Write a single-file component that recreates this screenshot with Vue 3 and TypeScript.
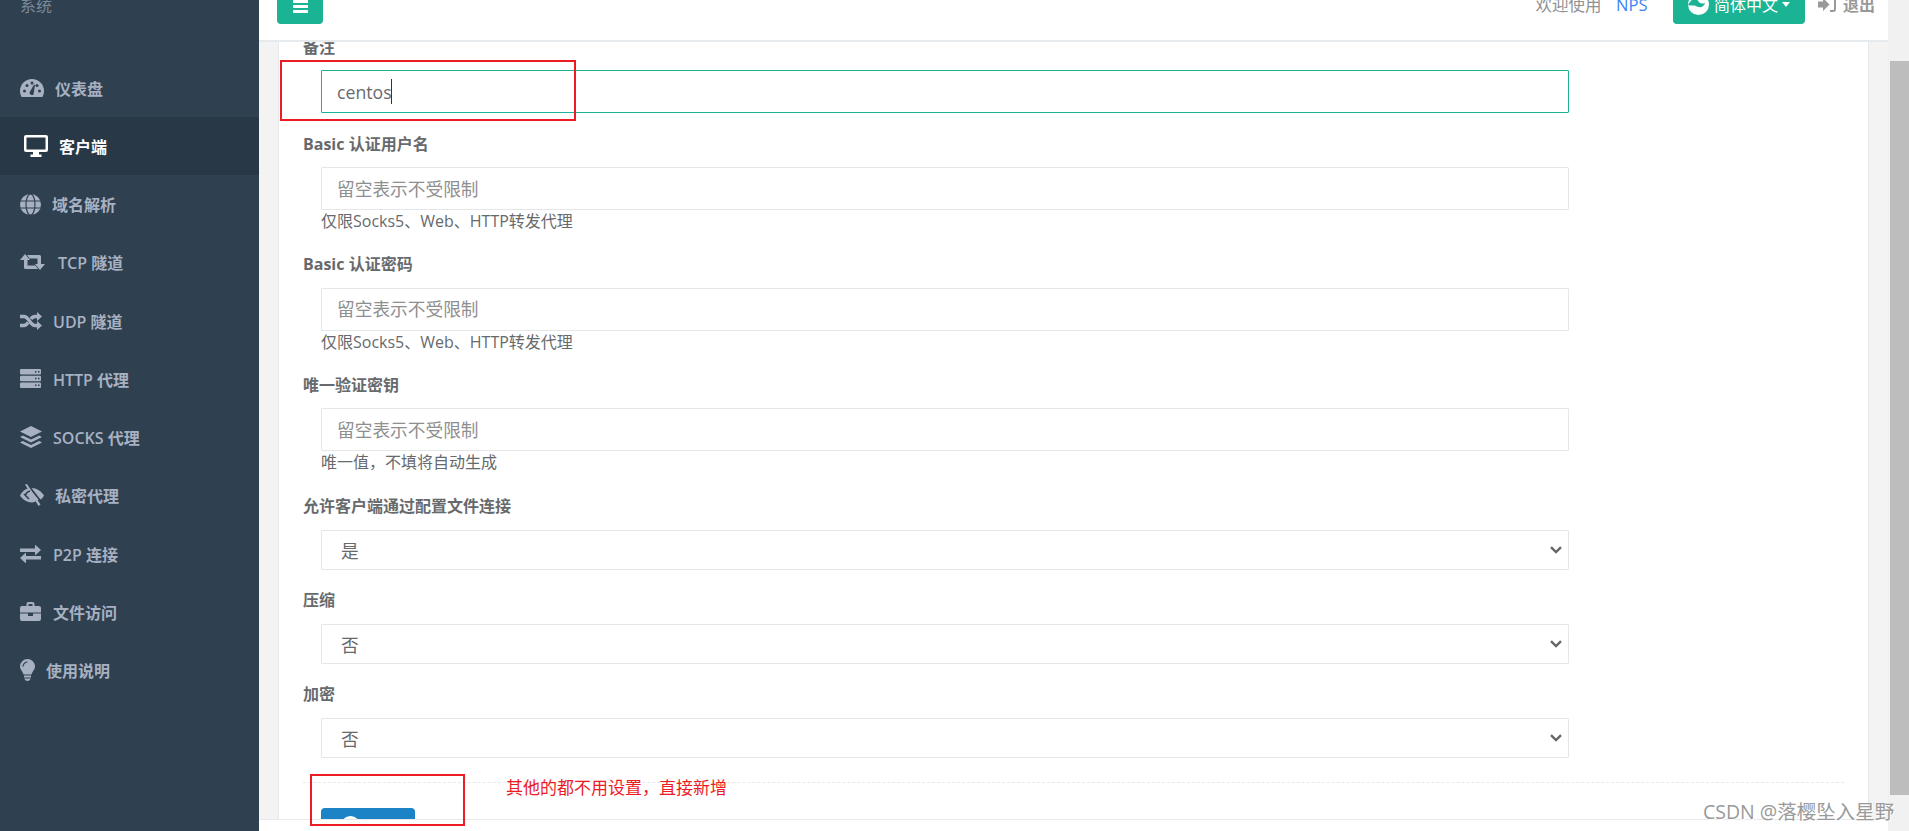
<script setup lang="ts">
interface NavItem {
  id: string
  label: string
  w: number
  h: number
  gap: number
  active?: boolean
}

const navItems: NavItem[] = [
  { id: 'dash', label: '仪表盘', w: 24, h: 18, gap: 11 },
  { id: 'desktop', label: '客户端', w: 24, h: 22, gap: 11, active: true },
  { id: 'globe', label: '域名解析', w: 21, h: 21, gap: 11 },
  { id: 'retweet', label: 'TCP 隧道', w: 25, h: 16, gap: 13 },
  { id: 'random', label: 'UDP 隧道', w: 22, h: 18, gap: 11 },
  { id: 'server', label: 'HTTP 代理', w: 21, h: 19, gap: 12 },
  { id: 'layers', label: 'SOCKS 代理', w: 22, h: 22, gap: 11 },
  { id: 'eye', label: '私密代理', w: 24, h: 22, gap: 11 },
  { id: 'exchange', label: 'P2P 连接', w: 21, h: 18, gap: 12 },
  { id: 'case', label: '文件访问', w: 21, h: 19, gap: 12 },
  { id: 'bulb', label: '使用说明', w: 15, h: 22, gap: 11 },
]

const tip = '留空表示不受限制'
const proxyHelp = '仅限Socks5、Web、HTTP转发代理'
</script>

<template>
  <div class="page">
    <aside class="sidebar">
      <div class="sys">系统</div>
      <ul class="nav">
        <li v-for="item in navItems" :key="item.id" :class="['nav-item', { active: item.active }]">
          <svg
            class="nav-icon"
            :width="item.w"
            :height="item.h"
            :viewBox="`0 0 ${item.w} ${item.h}`"
            :style="{ marginRight: item.gap + 'px' }"
          >
            <template v-if="item.id === 'dash'">
              <path d="M1.6 18C.6 16.2 0 14.200 0 12A12 12 0 0 1 24 12C24 14.200 23.400 16.200 22.400 18Z" />
              <g fill="#2f4050">
                <circle cx="4.500" cy="12" r="1.500" />
                <circle cx="7" cy="6.500" r="1.500" />
                <circle cx="12" cy="4" r="1.500" />
                <circle cx="19.500" cy="12" r="1.500" />
                <circle cx="17" cy="6.500" r="1.500" />
                <path d="M9.500 13.500L14 5.500L15 6L13.500 15.500A2.500 2.500 0 0 1 9.500 13.500Z" />
              </g>
            </template>
            <template v-else-if="item.id === 'desktop'">
              <path fill-rule="evenodd" d="M2 0H22A2 2 0 0 1 24 2V15A2 2 0 0 1 22 17H15V19.500H17.500V22H6.500V19.500H9V17H2A2 2 0 0 1 0 15V2A2 2 0 0 1 2 0ZM2.500 2.500V14.500H21.500V2.500Z" />
            </template>
            <template v-else-if="item.id === 'globe'">
              <circle cx="10.500" cy="10.500" r="10.500" />
              <g fill="none" stroke="#2f4050" stroke-width="1.200">
                <ellipse cx="10.500" cy="10.500" rx="4.500" ry="10.500" />
                <path d="M.5 7H20.500M.5 14H20.500" />
              </g>
            </template>
            <template v-else-if="item.id === 'retweet'">
              <path d="M0 6L5 0L10 6H7.500V11.500H15.500L18 15H5.500A1.500 1.500 0 0 1 4 13.500V6Z" />
              <path d="M25 10L20 16L15 10H17.500V4.500H9.500L7 1H19.500A1.500 1.500 0 0 1 21 2.500V10Z" />
            </template>
            <template v-else-if="item.id === 'random'">
              <g fill="none" stroke="#a7b1c2" stroke-width="3.400">
                <path d="M0 4.500H4C9 4.500 10 13.500 15 13.500H18" />
                <path d="M0 13.500H4C6 13.500 7 12 8 10.500" />
                <path d="M11 7C12 5.500 13 4.500 15 4.500H18" />
              </g>
              <path d="M17 0L22 4.500L17 9ZM17 9L22 13.500L17 18Z" />
            </template>
            <template v-else-if="item.id === 'server'">
              <rect x="0" y="0" width="21" height="5.500" rx="1" />
              <rect x="0" y="6.750" width="21" height="5.500" rx="1" />
              <rect x="0" y="13.500" width="21" height="5.500" rx="1" />
              <g fill="#2f4050">
                <rect x="15" y="2" width="1.500" height="1.500" />
                <rect x="18" y="2" width="1.500" height="1.500" />
                <rect x="15" y="8.750" width="1.500" height="1.500" />
                <rect x="18" y="8.750" width="1.500" height="1.500" />
                <rect x="15" y="15.500" width="1.500" height="1.500" />
                <rect x="18" y="15.500" width="1.500" height="1.500" />
              </g>
            </template>
            <template v-else-if="item.id === 'layers'">
              <path d="M11 0L22 5.500L11 11L0 5.500Z" />
              <path d="M2.800 9.500L11 13.500L19.200 9.500L22 11L11 16.500L0 11Z" />
              <path d="M2.800 15L11 19L19.200 15L22 16.500L11 22L0 16.500Z" />
            </template>
            <template v-else-if="item.id === 'eye'">
              <path d="M0 11.500C2 7.500 5.500 5 9 4.300L18.500 15.500C16 17.500 13.500 18.500 12 18.500C7 18.500 2.500 15.500 0 11.500Z" />
              <path d="M11.500 4C16.500 4 21.500 7.500 24 11.500C23 13.500 22 14.500 20.500 15.500Z" />
              <path d="M5 0.500L7 0L20.500 20.500L18.500 22Z" />
              <path fill="none" stroke="#2f4050" stroke-width="1.600" d="M5.500 11.500C6 9 8 7.500 10 7M9 15L4 10" />
            </template>
            <template v-else-if="item.id === 'exchange'">
              <path d="M0 4H15V0L21 5.500L15 11V7.500H0Z" transform="translate(0 -0.500)" />
              <path d="M21 14H6V18L0 12.500L6 7V10.500H21Z" transform="translate(0 0.500)" />
            </template>
            <template v-else-if="item.id === 'case'">
              <path fill-rule="evenodd" d="M6.500 4V2A2 2 0 0 1 8.500 0H12.500A2 2 0 0 1 14.500 2V4H19A2 2 0 0 1 21 6V10.500H0V6A2 2 0 0 1 2 4ZM8.500 2V4H12.500V2Z" />
              <path d="M0 11.500H8V14H13V11.500H21V17A2 2 0 0 1 19 19H2A2 2 0 0 1 0 17Z" />
            </template>
            <template v-else>
              <path d="M7.500 0A7.500 7.500 0 0 1 15 7.500C15 10.500 12.500 12 11.500 15.500H3.500C2.500 12 0 10.500 0 7.500A7.500 7.500 0 0 1 7.500 0Z" />
              <path d="M4 16.500H11V18.500H4ZM4.500 19.500H10.500C10.500 21 9 22 7.500 22C6 22 4.500 21 4.500 19.500Z" />
              <path fill="none" stroke="#2f4050" stroke-width="1.200" d="M3 7.500A4.500 4.500 0 0 1 7.500 3" />
            </template>
          </svg>
          <span>{{ item.label }}</span>
        </li>
      </ul>
    </aside>

    <main class="main">
      <header class="topbar">
        <div class="topbar-row">
          <button class="green-btn menu-btn" type="button">
            <svg width="15" height="14" viewBox="0 0 15 14" fill="#fff">
              <rect y="0" width="15" height="3" rx=".5" />
              <rect y="5" width="15" height="3" rx=".5" />
              <rect y="10" width="15" height="3" rx=".5" />
            </svg>
          </button>
          <div class="spacer"></div>
          <span class="welcome">欢迎使用</span>
          <a class="nps">NPS</a>
          <button class="green-btn lang-btn" type="button">
            <svg width="21" height="21" viewBox="0 0 21 21">
              <circle cx="10.500" cy="10.500" r="10.500" fill="#fff" />
              <path d="M9 5C11 9 13 10.500 17 9C16 13 12 14.500 8 12C6 11 3 12 0 11C2 7 5 4 9 5Z" fill="#1ab394" />
            </svg>
            <span>简体中文</span>
            <i class="caret"></i>
          </button>
          <a class="logout">
            <svg width="18" height="15" viewBox="0 0 18 15" fill="#999">
              <path d="M0 4.500H5V1L11.500 7.500L5 14V10.500H0Z" />
              <path d="M12 0H15A3 3 0 0 1 18 3V12A3 3 0 0 1 15 15H12V13H15A1 1 0 0 0 16 12V3A1 1 0 0 0 15 2H12Z" />
            </svg>
            <span>退出</span>
          </a>
        </div>
      </header>

      <section class="content">
        <form class="card" @submit.prevent>
          <div class="group first">
            <label>备注</label>
            <div class="field">
              <input class="ctl focus" type="text" value="centos" readonly />
              <i class="text-caret"></i>
            </div>
          </div>

          <div class="group has-help">
            <label>Basic 认证用户名</label>
            <input class="ctl" type="text" :placeholder="tip" />
            <p class="help">{{ proxyHelp }}</p>
          </div>

          <div class="group has-help">
            <label>Basic 认证密码</label>
            <input class="ctl" type="text" :placeholder="tip" />
            <p class="help">{{ proxyHelp }}</p>
          </div>

          <div class="group has-help last-help">
            <label>唯一验证密钥</label>
            <input class="ctl" type="text" :placeholder="tip" />
            <p class="help">唯一值，不填将自动生成</p>
          </div>

          <div class="group">
            <label>允许客户端通过配置文件连接</label>
            <div class="field">
              <select class="ctl sel"><option>是</option><option>否</option></select>
              <svg class="chev" width="12" height="8" viewBox="0 0 12 8"><path d="M1 1.200L6 6L11 1.200" /></svg>
            </div>
          </div>

          <div class="group">
            <label>压缩</label>
            <div class="field">
              <select class="ctl sel"><option>否</option><option>是</option></select>
              <svg class="chev" width="12" height="8" viewBox="0 0 12 8"><path d="M1 1.200L6 6L11 1.200" /></svg>
            </div>
          </div>

          <div class="group">
            <label>加密</label>
            <div class="field">
              <select class="ctl sel"><option>否</option><option>是</option></select>
              <svg class="chev" width="12" height="8" viewBox="0 0 12 8"><path d="M1 1.200L6 6L11 1.200" /></svg>
            </div>
          </div>

          <div class="dash"></div>
          <button class="save-btn" type="button"><i class="plus"></i></button>
        </form>
      </section>

      <footer class="footer"></footer>
    </main>

    <div class="scrollbar"><div class="thumb"></div></div>

    <div class="mark mark-a"></div>
    <div class="mark mark-b"></div>
    <div class="red-note">其他的都不用设置，直接新增</div>
    <div class="watermark">CSDN @落樱坠入星野</div>
  </div>
</template>

<style scoped>
.page {
  position: relative;
  display: flex;
  width: 1909px;
  height: 831px;
  overflow: hidden;
  font-family: "Open Sans", "Noto Sans CJK SC", sans-serif;
  color: #676a6c;
  background: #fff;
}

.sidebar {
  flex: 0 0 259px;
  background: #2f4050;
  overflow: hidden;
}
.sys {
  margin: -6px 0 40.5px 20px;
  font-size: 16px;
  line-height: 24px;
  color: #7b8a99;
}
.nav {
  list-style: none;
  margin: 0;
  padding: 0;
}
.nav-item {
  display: flex;
  align-items: center;
  height: 58.25px;
  padding-left: 20px;
  font-size: 16px;
  font-weight: 600;
  color: #a7b1c2;
}
.nav-item.active {
  padding-left: 24px;
  background: #293846;
  color: #fff;
}
.nav-icon {
  flex: none;
  fill: currentColor;
}

.main {
  flex: 0 0 1629px;
  display: flex;
  flex-direction: column;
  min-width: 0;
}
.topbar {
  flex: 0 0 42px;
  box-sizing: border-box;
  border-bottom: 2px solid #e7eaec;
  background: #fff;
  overflow: hidden;
}
.topbar-row {
  display: flex;
  align-items: center;
  height: 40px;
  margin-top: -16px;
  padding: 0 13px 0 18px;
}
.spacer {
  flex: 1;
}
.green-btn {
  display: flex;
  align-items: center;
  height: 40px;
  border: 0;
  border-radius: 4px;
  background: #1ab394;
  color: #fff;
  font: inherit;
}
.menu-btn {
  width: 46px;
  justify-content: center;
  padding: 6px 0 0;
}
.welcome {
  font-size: 16.500px;
  color: #8f9193;
}
.nps {
  margin: 0 25.500px 0 14.500px;
  font-size: 16.500px;
  color: #3b82f6;
}
.lang-btn {
  width: 132px;
  padding: 0 0 0 15px;
  font-size: 16px;
}
.lang-btn span {
  margin-left: 5px;
}
.caret {
  margin-left: 4px;
  border-top: 5px solid #fff;
  border-left: 4px solid transparent;
  border-right: 4px solid transparent;
}
.logout {
  display: flex;
  align-items: center;
  margin-left: 13px;
  gap: 7px;
  font-size: 16px;
  font-weight: 700;
  color: #999;
}

.content {
  flex: 1;
  min-height: 0;
  padding: 0 19px;
  background: #f3f3f4;
  overflow: hidden;
}
.card {
  box-sizing: border-box;
  height: 100%;
  margin: 0;
  padding: 0 24px 0 24px;
  border-left: 1px solid #e7eaec;
  border-right: 1px solid #e7eaec;
  background: #fff;
  overflow: hidden;
}
.group {
  margin: 0 0 19.5px;
  width: 1266px;
}
.group.first {
  margin-top: -6.500px;
}
.group.has-help {
  margin-bottom: 21px;
}
.group.last-help {
  margin-bottom: 22px;
}
.group label {
  display: block;
  margin-bottom: 11.500px;
  font-size: 16px;
  font-weight: 700;
  line-height: 23px;
}
.ctl {
  display: block;
  box-sizing: border-box;
  width: 1248px;
  height: 43px;
  margin-left: 18px;
  padding: 0 15px;
  border: 1px solid #e5e6e7;
  border-radius: 1px;
  outline: 0;
  background: #fff;
  color: #676a6c;
  font: inherit;
  font-size: 17.700px;
}
.ctl::placeholder {
  color: #8e8f90;
  opacity: 1;
}
.ctl.focus {
  border-color: #1ab394;
}
.sel {
  height: 40px;
  padding: 3px 19px 0;
  appearance: none;
}
.field {
  position: relative;
}
.text-caret {
  position: absolute;
  left: 88px;
  top: 9px;
  width: 1px;
  height: 25px;
  background: #333;
}
.chev {
  position: absolute;
  left: 1247px;
  top: 16px;
  fill: none;
  stroke: #666;
  stroke-width: 2.400;
}
.help {
  margin: 0 0 0 18px;
  font-size: 16px;
  line-height: 22px;
}
.dash {
  margin-top: 24px;
  width: 1541px;
  border-top: 1px dashed #e7eaec;
}
.save-btn {
  position: relative;
  display: block;
  width: 94px;
  height: 40px;
  margin: 25px 0 0 18px;
  border: 0;
  border-radius: 4px;
  background: #1c84c6;
}
.plus {
  position: absolute;
  left: 20px;
  top: 8px;
  width: 19px;
  height: 19px;
  border-radius: 50%;
  background: #fff;
}
.footer {
  flex: 0 0 12px;
  box-sizing: border-box;
  border-top: 1px solid #e7eaec;
  background: #fff;
}

.scrollbar {
  flex: 1;
  padding: 61px 0 0 2px;
  background: #f1f1f1;
}
.thumb {
  height: 734px;
  background: #bdbdbd;
}

.mark {
  position: absolute;
  box-sizing: border-box;
  border: 2px solid #ed1c24;
}
.mark-a {
  left: 280px;
  top: 60px;
  width: 296px;
  height: 61px;
}
.mark-b {
  left: 310px;
  top: 774px;
  width: 155px;
  height: 52px;
}
.red-note {
  position: absolute;
  left: 506px;
  top: 776px;
  font-size: 17px;
  line-height: 24px;
  color: #ed1c24;
}
.watermark {
  position: absolute;
  left: 1703px;
  top: 799px;
  font-size: 19.500px;
  line-height: 26px;
  color: #9a9a9a;
  text-shadow: 1px 1px 1px #fff;
  white-space: nowrap;
}
</style>
